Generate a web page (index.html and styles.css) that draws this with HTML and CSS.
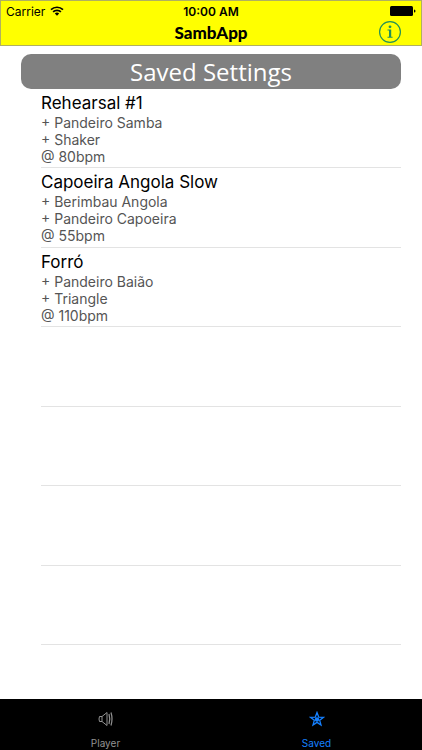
FILE: index.html
```
<!DOCTYPE html>
<html lang="en">
<head>
  <meta charset="UTF-8" />
  <meta name="viewport" content="width=device-width, initial-scale=1.0" />
  <title>SambApp</title>
  <link rel="stylesheet" href="styles.css">
</head>
<body>
  <header class="top">
    <div class="status">
      <div class="carrier">
        <span>Carrier</span>
        <svg width="14" height="10" viewBox="0 0 14 10" aria-hidden="true">
          <path d="M1 3.7a8.6 8.6 0 0 1 12 0M3.1 5.9a5.6 5.6 0 0 1 7.8 0" fill="none" stroke="#000" stroke-width="1.7" />
          <path d="M4.8 7.5a3.2 3.2 0 0 1 4.4 0L7 9.8z" />
        </svg>
      </div>
      <span class="clock">10:00 AM</span>
      <svg class="battery" width="26" height="10" viewBox="0 0 26 10" aria-hidden="true">
        <rect width="23" height="10" rx="1.5" />
        <path d="M24 3.5q1.5 0 1.5 1.5t-1.5 1.5z" />
      </svg>
    </div>
    <div class="navbar">
      <h1>SambApp</h1>
      <button class="info" type="button" aria-label="Info">
        <svg width="24" height="22" viewBox="0 0 24 22" aria-hidden="true">
          <circle cx="12" cy="11" r="10.4" fill="none" stroke="#239157" stroke-width="1.2" />
          <circle cx="12" cy="5.8" r="1.4" fill="#239157" />
          <path d="M9.5 8.6h3.7v7.2h1.4v1H9.5v-1H11V9.600H9.500z" fill="#239157" />
        </svg>
      </button>
    </div>
  </header>

  <main>
    <h2>Saved Settings</h2>
    <ul class="settings">
      <li>
        <h3>Rehearsal #1</h3>
        <p>+ Pandeiro Samba<br />+ Shaker<br />@ 80bpm</p>
      </li>
      <li>
        <h3>Capoeira Angola Slow</h3>
        <p>+ Berimbau Angola<br />+ Pandeiro Capoeira<br />@ 55bpm</p>
      </li>
      <li>
        <h3>Forró</h3>
        <p>+ Pandeiro Baião<br />+ Triangle<br />@ 110bpm</p>
      </li>
      <li></li>
      <li></li>
      <li></li>
      <li></li>
    </ul>
  </main>

  <nav class="tabs">
    <a href="#player">
      <svg width="16" height="16" viewBox="0 0 16 16" fill="none" stroke="currentColor" aria-hidden="true">
        <path d="M1.5 5.5H4l5-4v13l-5-4H1.5q-1-2.500 0-5zM4 5.500v5" />
        <path d="M11 3q1.500 5 0 10M13 1.500q2 6.500 0 13" stroke-width="1.2" />
      </svg>
      <span>Player</span>
    </a>
    <a href="#saved" class="active">
      <svg width="16" height="16" viewBox="0 0 16 16" aria-hidden="true">
        <path d="M8 1.500l1.700 4.600 4.800.2-3.800 3 1.300 4.700L8 11.400 4 14l1.300-4.700-3.800-3 4.800-.2z" fill="none" stroke="currentColor" stroke-width="1.300" />
        <circle cx="8" cy="8.500" r="2.200" fill="currentColor" />
      </svg>
      <span>Saved</span>
    </a>
  </nav>
</body>
</html>
```
FILE: styles.css
```
* {
  box-sizing: border-box;
}

body {
  font-family: Inter, "Liberation Sans", sans-serif;
  background-color: #fff;
  color: #000;
  margin: 0;
  min-height: 100vh;
  display: flex;
  flex-direction: column;
}

h1,
h2,
h3,
p,
ul {
  margin: 0;
  padding: 0;
}

.top {
  background-color: #ffff00;
  border: 1px solid #b0b060;
}

.status {
  display: grid;
  grid-template-columns: 1fr auto 1fr;
  align-items: center;
  height: 20px;
  padding: 0 5px;
  font-size: 12px;
}

.carrier {
  display: flex;
  align-items: center;
  gap: 5px;
}

.clock {
  font-weight: 600;
}

.battery {
  justify-self: end;
}

.navbar {
  display: grid;
  grid-template-columns: 1fr auto 1fr;
  align-items: start;
  padding: 0 19px;
}

h1 {
  grid-column: 2;
  font-family: Lato, sans-serif;
  font-size: 17px;
  font-weight: 900;
  line-height: 24px;
}

.info {
  justify-self: end;
  display: flex;
  padding: 0;
  border: none;
  background: none;
  cursor: pointer;
}

main {
  flex: 1;
  display: flex;
  flex-direction: column;
  padding: 8px 21px 54px;
}

h2 {
  background-color: #808080;
  color: white;
  border-radius: 10px;
  font-family: "Open Sans", sans-serif;
  font-size: 24px;
  font-weight: 400;
  line-height: 35px;
  text-align: center;
}

.settings {
  flex: 1;
  display: grid;
  grid-template-rows: repeat(7, 1fr);
  margin-left: 20px;
  list-style: none;
}

.settings li {
  border-bottom: 1px solid #e3e3e3;
  padding-top: 4px;
}

h3 {
  font-size: 17px;
  font-weight: 400;
  line-height: 21px;
}

.settings p {
  color: #555;
  font-size: 14px;
  line-height: 17px;
}

.tabs {
  display: grid;
  grid-template-columns: 1fr 1fr;
  background-color: #000;
  height: 51px;
}

.tabs a {
  display: flex;
  flex-direction: column;
  align-items: center;
  gap: 10px;
  padding-top: 12px;
  color: #929292;
  font-size: 10px;
  line-height: 12px;
  text-decoration: none;
}

.tabs .active {
  color: #1580ff;
}
```
